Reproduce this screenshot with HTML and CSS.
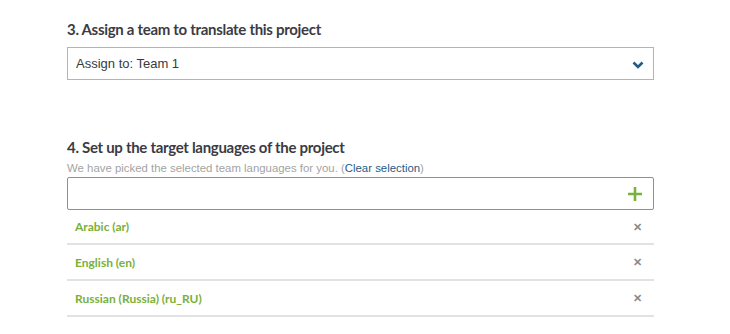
FILE: index.html
```html
<!DOCTYPE html>
<html>
<head>
    <title>New project</title>
    <link rel="stylesheet" href="styles.css">
</head>
<body>
    <div class="wizard">
        <div class="step step-team">
            <h2 class="step-title">3. Assign a team to translate this project</h2>
            <div class="select-box">
                <span>Assign to: Team 1</span>
                <svg class="chevron" width="12" height="8" viewBox="0 0 12 8">
                    <path d="M1.5 1.5 L6 6 L10.5 1.5" fill="none" stroke="#1f5b86" stroke-width="2.6"/>
                </svg>
            </div>
        </div>

        <div class="step step-languages">
            <h2 class="step-title">4. Set up the target languages of the project</h2>
            <p class="hint">We have picked the selected team languages for you. (<a href="#">Clear selection</a>)</p>
            <div class="lang-input">
                <svg class="plus" width="14" height="14" viewBox="0 0 14 14">
                    <path d="M7 0 V14 M0 7 H14" stroke="#77b23a" stroke-width="2.6"/>
                </svg>
            </div>
            <ul class="lang-list">
                <li><span>Arabic (ar)</span><span class="remove">&#x2715;</span></li>
                <li><span>English (en)</span><span class="remove">&#x2715;</span></li>
                <li><span>Russian (Russia) (ru_RU)</span><span class="remove">&#x2715;</span></li>
            </ul>
        </div>
    </div>
</body>
</html>
```

FILE: styles.css
```css
body {
    font-family: Lato, "Open Sans", Arial, sans-serif;
    margin: 0;
    padding: 0;
    background: #fff;
    color: #3d3d45;
}

.wizard {
    width: 587px;
    margin-left: 67px;
    padding-top: 19px;
}

.step-title {
    font-size: 15px;
    font-weight: 700;
    margin: 0;
    line-height: 20px;
    letter-spacing: -0.3px;
    color: #3b3b44;
}

.step-team .step-title {
    margin-bottom: 8px;
}

.select-box {
    height: 31px;
    border: 1px solid #b4b4b4;
    display: flex;
    align-items: center;
    justify-content: space-between;
    padding: 0 9px 0 8px;
    font-family: "Liberation Sans", Arial, sans-serif;
    font-size: 13px;
    color: #3a3a3a;
}

.chevron {
    margin-top: 2px;
}

.step-languages {
    margin-top: 57px;
}

.hint {
    margin: 3px 0 0;
    height: 16px;
    line-height: 16px;
    font-family: "Liberation Sans", Arial, sans-serif;
    font-size: 11.4px;
    color: #a3a3a3;
}

.hint a {
    color: #1f5b86;
    text-decoration: none;
}

.lang-input {
    margin-top: 1px;
    height: 31px;
    border: 1px solid #8f8f8f;
    border-radius: 2px;
    display: flex;
    align-items: center;
    justify-content: flex-end;
    padding-right: 11px;
}

.lang-list {
    list-style: none;
    margin: 0;
    padding: 0;
}

.lang-list li {
    height: 34px;
    border-bottom: 2px solid #e2e2e2;
    display: flex;
    align-items: center;
    justify-content: space-between;
    padding: 0 12px 0 8px;
    font-size: 12px;
    font-weight: 700;
    color: #7ab03a;
}

.lang-list li:first-child {
    height: 33px;
}

.remove {
    color: #8a8a8a;
    font-size: 11px;
    font-weight: 700;
}
```
